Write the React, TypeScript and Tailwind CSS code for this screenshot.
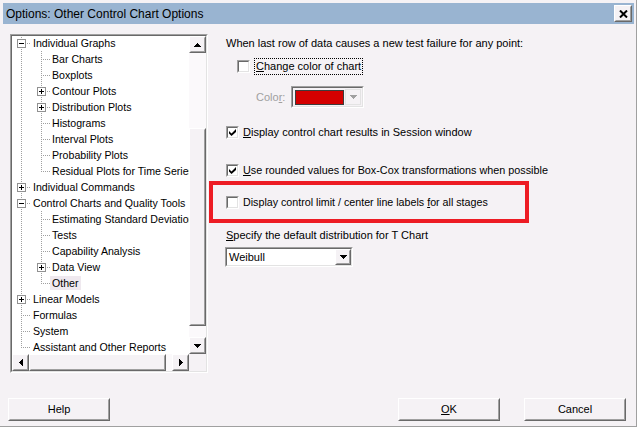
import React from 'react';

type TreeNode = {
  label: string;
  level: 0 | 1;
  box?: 'plus' | 'minus';
  last?: boolean;
  selected?: boolean;
};

const nodes: TreeNode[] = [
  { label: 'Individual Graphs', level: 0, box: 'minus' },
  { label: 'Bar Charts', level: 1 },
  { label: 'Boxplots', level: 1 },
  { label: 'Contour Plots', level: 1, box: 'plus' },
  { label: 'Distribution Plots', level: 1, box: 'plus' },
  { label: 'Histograms', level: 1 },
  { label: 'Interval Plots', level: 1 },
  { label: 'Probability Plots', level: 1 },
  { label: 'Residual Plots for Time Series', level: 1, last: true },
  { label: 'Individual Commands', level: 0, box: 'plus' },
  { label: 'Control Charts and Quality Tools', level: 0, box: 'minus' },
  { label: 'Estimating Standard Deviation', level: 1 },
  { label: 'Tests', level: 1 },
  { label: 'Capability Analysis', level: 1 },
  { label: 'Data View', level: 1, box: 'plus' },
  { label: 'Other', level: 1, last: true, selected: true },
  { label: 'Linear Models', level: 0, box: 'plus' },
  { label: 'Formulas', level: 0 },
  { label: 'System', level: 0 },
  { label: 'Assistant and Other Reports', level: 0, last: true },
];

// raised 3D frame, classic windows look
const Raised: React.FC<{ className?: string; children?: React.ReactNode }> = ({ className = '', children }) => (
  <div className={`border border-t-white border-l-white border-b-[#696969] border-r-[#696969] bg-[#f5f2f5] ${className}`}>
    <div className="w-full h-full border border-t-[#f5f2f5] border-l-[#f5f2f5] border-b-[#a0a0a0] border-r-[#a0a0a0] flex items-center justify-center">
      {children}
    </div>
  </div>
);

const Arrow: React.FC<{ dir: 'up' | 'down' | 'left' | 'right'; color?: string }> = ({ dir, color = '#000' }) => {
  const shapes = {
    up: { w: 7, h: 4, d: 'M3.5 0L7 4H0z' },
    down: { w: 7, h: 4, d: 'M0 0h7L3.5 4z' },
    left: { w: 4, h: 7, d: 'M4 0v7L0 3.5z' },
    right: { w: 4, h: 7, d: 'M0 0l4 3.5L0 7z' },
  }[dir];
  return (
    <svg width={shapes.w} height={shapes.h} viewBox={`0 0 ${shapes.w} ${shapes.h}`} shapeRendering="crispEdges">
      <path d={shapes.d} fill={color} />
    </svg>
  );
};

const Gutter: React.FC<{ node: TreeNode }> = ({ node }) => {
  const w = node.level === 0 ? 19 : 38;
  const lx = node.level === 0 ? 9.5 : 29.5;
  return (
    <svg width={w} height={16} className="shrink-0" shapeRendering="crispEdges">
      <g stroke="#a0a0a0" strokeDasharray="1 1" fill="none">
        {node.level === 1 && <line x1={9.5} y1={0} x2={9.5} y2={16} />}
        <line x1={lx} y1={0} x2={lx} y2={node.last ? 9 : 16} />
        <line x1={lx + 1} y1={8.5} x2={w} y2={8.5} />
      </g>
      {node.box && (
        <g shapeRendering="crispEdges">
          <rect x={lx - 4} y={4.5} width={8} height={8} fill="#fff" stroke="#919191" />
          <line x1={lx - 2.5} y1={8.5} x2={lx + 2.5} y2={8.5} stroke="#000" />
          {node.box === 'plus' && <line x1={lx} y1={6} x2={lx} y2={11} stroke="#000" />}
        </g>
      )}
    </svg>
  );
};

const TreeView = () => (
  <div className="w-[198px] h-[339px] shrink-0 border border-t-[#a0a0a0] border-l-[#a0a0a0] border-b-white border-r-white">
    <div className="w-full h-full border border-t-[#696969] border-l-[#696969] border-b-[#e3e3e3] border-r-[#e3e3e3] bg-white grid grid-cols-[1fr_17px] grid-rows-[1fr_17px]">
      <div className="overflow-hidden text-[10.6px]">
        <div className="-mt-px">
          {nodes.map((n) => (
            <div key={n.label} className="h-4 flex items-center whitespace-nowrap">
              <Gutter node={n} />
              <span className={`h-[14px] leading-[14px] px-[2px] ${n.selected ? 'bg-[#efe9ef]' : ''}`}>{n.label}</span>
            </div>
          ))}
        </div>
      </div>

      <div className="flex flex-col bg-[#fbf9fb]">
        <Raised className="h-[17px] shrink-0">
          <Arrow dir="up" />
        </Raised>
        <div className="h-[75px]" />
        <Raised className="h-[198px] shrink-0" />
        <div className="flex-1" />
        <Raised className="h-[17px] shrink-0">
          <Arrow dir="down" />
        </Raised>
      </div>

      <div className="flex bg-[#fbf9fb]">
        <Raised className="w-[17px] shrink-0">
          <Arrow dir="left" />
        </Raised>
        <Raised className="w-[137px] shrink-0" />
        <div className="flex-1" />
        <Raised className="w-[17px] shrink-0">
          <Arrow dir="right" />
        </Raised>
      </div>
      <div className="bg-[#f5f2f5]" />
    </div>
  </div>
);

const CheckBox: React.FC<{ checked?: boolean }> = ({ checked }) => (
  <div className="w-[13px] h-[13px] shrink-0 border border-t-[#a0a0a0] border-l-[#a0a0a0] border-b-white border-r-white">
    <div className="w-full h-full border border-t-[#696969] border-l-[#696969] border-b-[#e3e3e3] border-r-[#e3e3e3] bg-white flex items-center justify-center">
      {checked && (
        <svg width="7" height="7" viewBox="0 0 7 7">
          <path d="M0 2L2.5 4.5L7 0V3L2.5 7L0 4.6Z" fill="#000" />
        </svg>
      )}
    </div>
  </div>
);

const Sunken: React.FC<{ className?: string; inner?: string; children?: React.ReactNode }> = ({ className = '', inner = '', children }) => (
  <div className={`border border-t-[#a0a0a0] border-l-[#a0a0a0] border-b-white border-r-white ${className}`}>
    <div className={`w-full h-full border border-t-[#696969] border-l-[#696969] border-b-[#e3e3e3] border-r-[#e3e3e3] ${inner}`}>
      {children}
    </div>
  </div>
);

const OptionsPanel = () => (
  <div className="flex flex-col ml-[18px] leading-4">
    <div className="mt-px h-4">When last row of data causes a new test failure for any point:</div>

    <div className="mt-[7px] ml-[11px] h-4 flex items-center">
      <CheckBox />
      <span className="ml-[4px] px-px h-[17px] leading-[15px] border border-dotted border-black">
        <u>C</u>hange color of chart
      </span>
    </div>

    <div className="mt-[12px] ml-[30px] flex items-center">
      <span className="text-[#a0a0a0] w-[35px]">
        Colo<u>r</u>:
      </span>
      <Sunken className="w-[73px] h-[22px]" inner="flex items-center pl-[2px] pr-px bg-[#f5f2f5]">
        <div className="flex-1 h-[15px] bg-[#d40000] border border-[#3c3c3c]" />
        <div className="ml-[1px] w-[16px] h-[16px] border border-[#e3e3e3] flex items-center justify-center">
          <Arrow dir="down" color="#a0a0a0" />
        </div>
      </Sunken>
    </div>

    <div className="mt-[16px] h-4 flex items-center">
      <CheckBox checked />
      <span className="ml-[4px]">
        <u>D</u>isplay control chart results in Session window
      </span>
    </div>

    <div className="mt-[22px] h-4 flex items-center text-[10.8px]">
      <CheckBox checked />
      <span className="ml-[4px]">
        <u>U</u>se rounded values for Box-Cox transformations when possible
      </span>
    </div>

    <div className="mt-[3px] -ml-[17px] w-[320px] h-[42px] border-4 border-[#ed1c24] pl-[13px] pt-[9px]">
      <div className="h-4 flex items-center text-[10.7px]">
        <CheckBox />
        <span className="ml-[4px]">
          Display control limit / center line labels <u>f</u>or all stages
        </span>
      </div>
    </div>

    <div className="mt-[4px] h-4">
      <u>S</u>pecify the default distribution for T Chart
    </div>

    <Sunken className="mt-[4px] -ml-px w-[128px] h-[20px]" inner="bg-white flex items-center pl-[2px]">
      <span className="flex-1">Weibull</span>
      <Raised className="w-[16px] h-[16px]">
        <Arrow dir="down" />
      </Raised>
    </Sunken>
  </div>
);

export default function App() {
  return (
    <div className="w-[637px] h-[427px] overflow-hidden bg-[#f5f2f5] font-['Liberation_Sans',Arial,sans-serif] text-[11px] text-black pt-[3px] pl-[3px] pr-[2px] border-r border-b border-[#a0a0a0] flex flex-col">
      <div className="h-[21px] shrink-0 bg-[#99b4d1] flex items-center justify-between pl-[3px] pr-[2px]">
        <span className="text-[12px]">Options: Other Control Chart Options</span>
        <Raised className="w-[18px] h-[17px]">
          <svg width="9" height="8" viewBox="0 0 9 8">
            <path d="M1 0.5L8 7.5M8 0.5L1 7.5" stroke="#000" strokeWidth="2" />
          </svg>
        </Raised>
      </div>

      <div className="flex items-start mt-[10px] ml-[7px]">
        <TreeView />
        <OptionsPanel />
      </div>

      <div className="flex mt-[25px] ml-[5px]">
        <Raised className="w-[102px] h-[23px]">Help</Raised>
        <Raised className="w-[102px] h-[23px] ml-[288px]">
          <span>
            <u>O</u>K
          </span>
        </Raised>
        <Raised className="w-[102px] h-[23px] ml-[24px]">Cancel</Raised>
      </div>
    </div>
  );
}
